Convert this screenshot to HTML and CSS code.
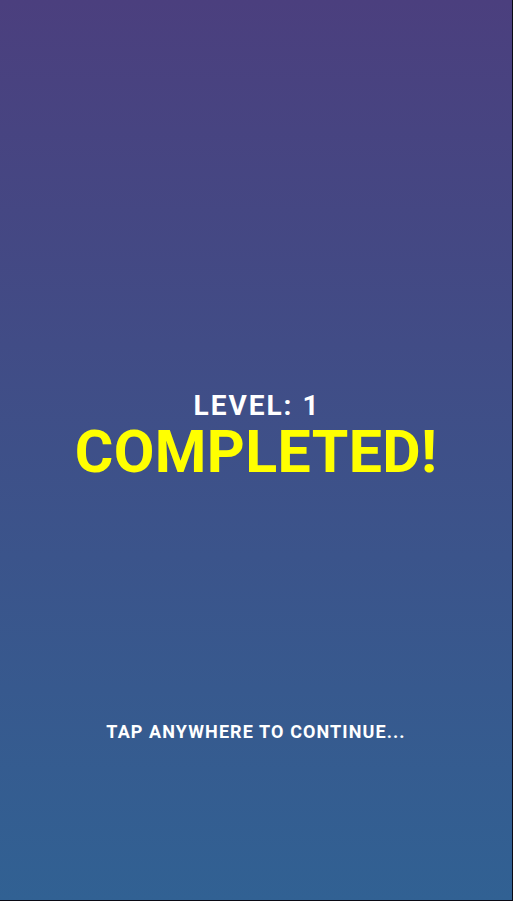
FILE: index.html
```html
<!DOCTYPE html>
<html lang="en">
<head>
<meta charset="utf-8">
<title>Level Completed</title>
<link rel="stylesheet" href="styles.css">
</head>
<body>
<main class="screen">
  <section class="result">
    <div class="level">LEVEL: 1</div>
    <div class="completed">COMPLETED!</div>
  </section>
  <div class="tap">TAP ANYWHERE TO CONTINUE...</div>
</main>
</body>
</html>
```
FILE: styles.css
```css
html, body {
  margin: 0;
  padding: 0;
  background: #000;
}
.screen {
  box-sizing: border-box;
  width: 513px;
  height: 901px;
  border-right: 1px solid #0a0a14;
  border-bottom: 1px solid #0a0a14;
  background: linear-gradient(180deg, #4b3f7e 0%, #316193 100%);
  display: flex;
  flex-direction: column;
  align-items: center;
  padding-top: 392px;
  font-family: Roboto, "Liberation Sans", sans-serif;
  font-weight: 700;
  text-align: center;
}
.result {
  display: flex;
  flex-direction: column;
  align-items: center;
}
.level {
  color: #ffffff;
  font-size: 28px;
  line-height: 28px;
  letter-spacing: 2px;
  margin-left: 2px;
}
.completed {
  color: #ffff00;
  font-size: 59px;
  line-height: 59px;
  letter-spacing: 0.4px;
  margin-top: 2px;
}
.tap {
  color: #ffffff;
  font-size: 18px;
  line-height: 18px;
  letter-spacing: 1.1px;
  margin-top: 242px;
}
```
